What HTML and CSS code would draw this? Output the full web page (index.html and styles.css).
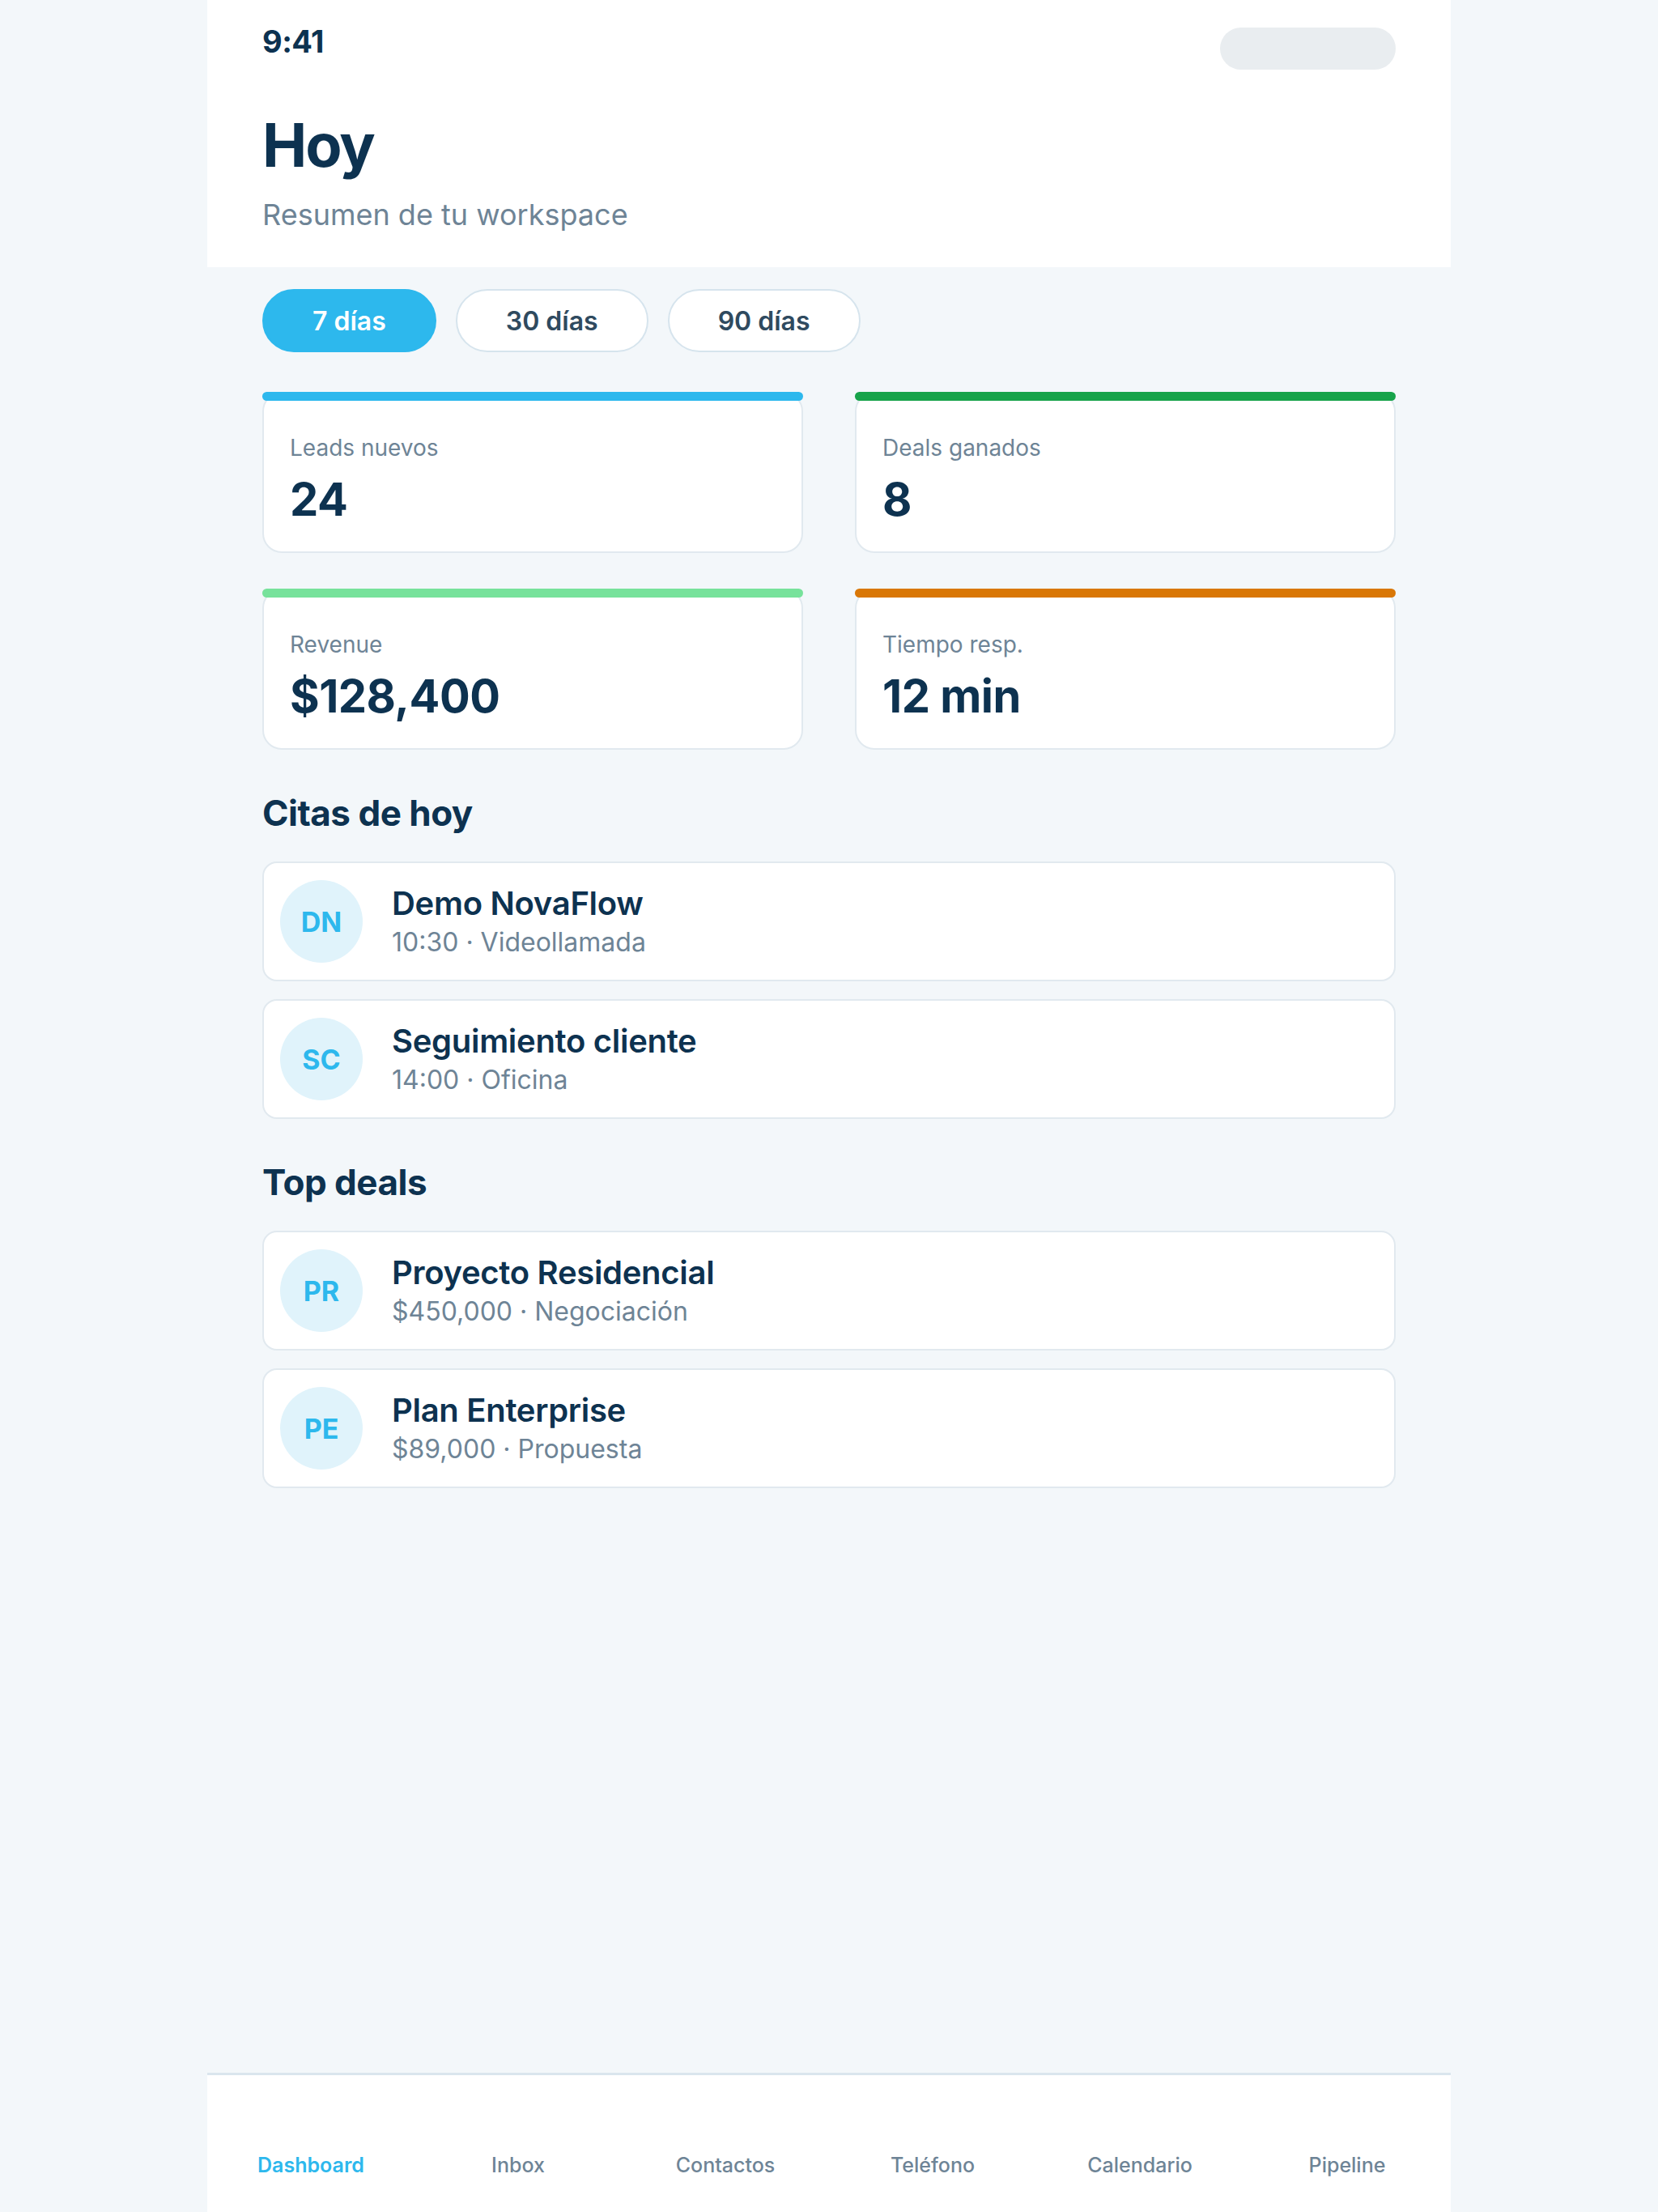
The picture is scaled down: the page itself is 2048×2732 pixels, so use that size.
FILE: index.html
```html
<!DOCTYPE html>
<html lang="es">
<head>
    <meta charset="UTF-8">
    <meta name="viewport" content="width=device-width, initial-scale=1.0">
    <title>Hoy</title>
    <link rel="stylesheet" href="styles.css">
</head>
<body>
    <div class="app">
        <header class="top">
            <div class="status-bar">
                <span class="time">9:41</span>
                <span class="status-pill"></span>
            </div>
            <h1>Hoy</h1>
            <p class="subtitle">Resumen de tu workspace</p>
        </header>

        <main class="content">
            <div class="range-tabs">
                <button class="range active">7 días</button>
                <button class="range">30 días</button>
                <button class="range">90 días</button>
            </div>

            <div class="stats">
                <div class="stat-card blue">
                    <div class="stat-label">Leads nuevos</div>
                    <div class="stat-value">24</div>
                </div>
                <div class="stat-card green">
                    <div class="stat-label">Deals ganados</div>
                    <div class="stat-value">8</div>
                </div>
                <div class="stat-card mint">
                    <div class="stat-label">Revenue</div>
                    <div class="stat-value">$128,400</div>
                </div>
                <div class="stat-card orange">
                    <div class="stat-label">Tiempo resp.</div>
                    <div class="stat-value">12 min</div>
                </div>
            </div>

            <section class="section">
                <h2>Citas de hoy</h2>
                <div class="list">
                    <div class="list-item">
                        <div class="avatar">DN</div>
                        <div class="item-text">
                            <div class="item-title">Demo NovaFlow</div>
                            <div class="item-sub">10:30 · Videollamada</div>
                        </div>
                    </div>
                    <div class="list-item">
                        <div class="avatar">SC</div>
                        <div class="item-text">
                            <div class="item-title">Seguimiento cliente</div>
                            <div class="item-sub">14:00 · Oficina</div>
                        </div>
                    </div>
                </div>
            </section>

            <section class="section">
                <h2>Top deals</h2>
                <div class="list">
                    <div class="list-item">
                        <div class="avatar">PR</div>
                        <div class="item-text">
                            <div class="item-title">Proyecto Residencial</div>
                            <div class="item-sub">$450,000 · Negociación</div>
                        </div>
                    </div>
                    <div class="list-item">
                        <div class="avatar">PE</div>
                        <div class="item-text">
                            <div class="item-title">Plan Enterprise</div>
                            <div class="item-sub">$89,000 · Propuesta</div>
                        </div>
                    </div>
                </div>
            </section>
        </main>

        <nav class="tab-bar">
            <a class="tab active">Dashboard</a>
            <a class="tab">Inbox</a>
            <a class="tab">Contactos</a>
            <a class="tab">Teléfono</a>
            <a class="tab">Calendario</a>
            <a class="tab">Pipeline</a>
        </nav>
    </div>
</body>
</html>
```

FILE: styles.css
```css
body {
    margin: 0;
    background-color: #f3f7fa;
    font-family: 'Inter', 'Noto Sans', sans-serif;
    color: #0d3250;
}

.app {
    max-width: 1536px;
    margin: 0 auto;
    min-height: 100vh;
    display: flex;
    flex-direction: column;
    background-color: #f3f7fa;
}

/* header */

.top {
    background: white;
    padding: 27px 68px 43px;
}

.status-bar {
    display: flex;
    justify-content: space-between;
    align-items: flex-start;
}

.time {
    font-size: 38px;
    line-height: 48px;
    font-weight: 700;
    letter-spacing: -0.5px;
}

.status-pill {
    width: 217px;
    height: 52px;
    margin-top: 7px;
    border-radius: 26px;
    background-color: #e9edf0;
}

h1 {
    margin: 47px 0 0;
    font-size: 74px;
    line-height: 92px;
    font-weight: 700;
    letter-spacing: -2px;
}

.subtitle {
    margin: 18px 0 0;
    font-size: 36px;
    line-height: 44px;
    color: #6e8496;
}

/* content */

.content {
    flex: 1;
    padding: 27px 68px 0;
}

.range-tabs {
    display: flex;
    gap: 24px;
}

.range {
    height: 78px;
    padding: 0 60px;
    border: 2px solid #d6e4ed;
    border-radius: 39px;
    background: white;
    font-family: inherit;
    font-size: 32px;
    font-weight: 600;
    color: #2f4a5f;
}

.range.active {
    background-color: #2db8ed;
    border-color: #2db8ed;
    color: white;
}

.stats {
    display: grid;
    grid-template-columns: 1fr 1fr;
    column-gap: 64px;
    row-gap: 44px;
    margin: 49px 0 23px;
}

.stat-card {
    position: relative;
    background: white;
    border: 2px solid #e1e9ef;
    border-radius: 24px;
    padding: 49px 32px 30px;
}

/* coloured strip laid over the top edge of the card */
.stat-card::before {
    content: "";
    position: absolute;
    top: -2px;
    left: -2px;
    right: -2px;
    height: 11px;
    border-radius: 6px;
    background-color: #2db8ed;
}

.stat-card.green::before { background-color: #17a34a; }
.stat-card.mint::before { background-color: #77e29b; }
.stat-card.orange::before { background-color: #d97706; }

.stat-label {
    font-size: 28px;
    line-height: 36px;
    color: #6e8496;
}

.stat-value {
    margin-top: 12px;
    font-size: 56px;
    line-height: 68px;
    font-weight: 700;
    letter-spacing: -0.5px;
}

.section {
    margin-top: 52px;
}

h2 {
    margin: 0;
    font-size: 44px;
    line-height: 53px;
    font-weight: 700;
    letter-spacing: -0.5px;
}

.list {
    display: flex;
    flex-direction: column;
    gap: 22px;
    margin-top: 33px;
}

.list-item {
    display: flex;
    align-items: center;
    gap: 36px;
    padding: 21px 20px;
    background: white;
    border: 2px solid #e1e9ef;
    border-radius: 18px;
}

.avatar {
    width: 102px;
    height: 102px;
    border-radius: 50%;
    background-color: #e0f3fb;
    color: #2db8ed;
    font-size: 34px;
    font-weight: 700;
    display: flex;
    align-items: center;
    justify-content: center;
    flex-shrink: 0;
}

.item-title {
    font-size: 40px;
    line-height: 48px;
    font-weight: 600;
    letter-spacing: -0.3px;
}

.item-sub {
    margin-top: 4px;
    font-size: 32px;
    line-height: 40px;
    color: #6e8496;
}

/* bottom tabs */

.tab-bar {
    display: grid;
    grid-template-columns: repeat(6, 1fr);
    background: white;
    border-top: 3px solid #dae6ee;
    padding: 96px 0 43px;
}

.tab {
    text-align: center;
    font-size: 25px;
    line-height: 30px;
    font-weight: 500;
    color: #6e8496;
}

.tab.active {
    color: #2db8ed;
    font-weight: 600;
}
```
